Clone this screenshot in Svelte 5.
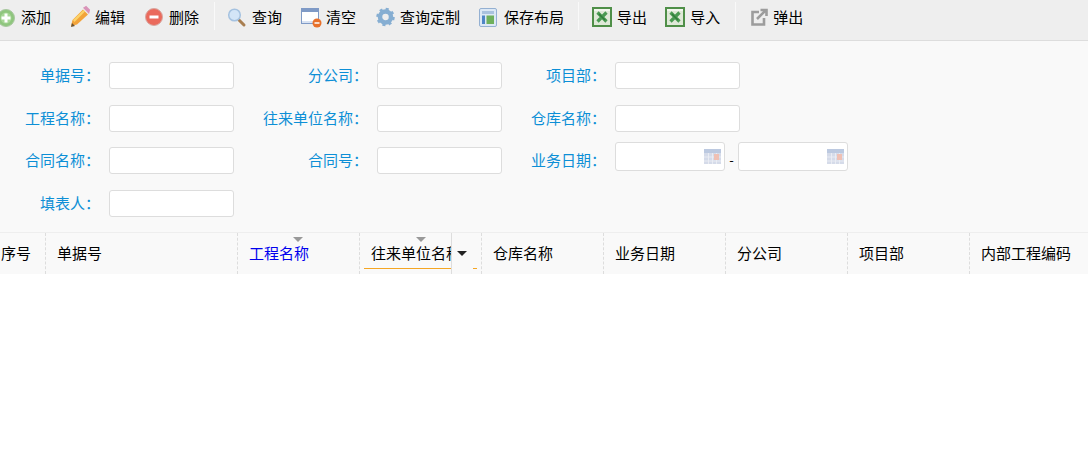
<script>
	const tools = [
		{ icon: 'add', label: '添加' },
		{ icon: 'edit', label: '编辑' },
		{ icon: 'del', label: '删除' },
		{ sep: true },
		{ icon: 'search', label: '查询' },
		{ icon: 'clear', label: '清空' },
		{ icon: 'gear', label: '查询定制' },
		{ icon: 'layout', label: '保存布局' },
		{ sep: true },
		{ icon: 'excel', label: '导出' },
		{ icon: 'excel', label: '导入' },
		{ sep: true },
		{ icon: 'popup', label: '弹出' }
	];

	const rows = [
		['单据号', '分公司', '项目部'],
		['工程名称', '往来单位名称', '仓库名称'],
		['合同名称', '合同号', '业务日期'],
		['填表人']
	];

	const columns = [
		{ label: '序号', width: 46, cls: 'first' },
		{ label: '单据号', width: 192 },
		{ label: '工程名称', width: 122, cls: 'sorted' },
		{ label: '往来单位名称', width: 122, cls: 'hover' },
		{ label: '仓库名称', width: 122 },
		{ label: '业务日期', width: 122 },
		{ label: '分公司', width: 122 },
		{ label: '项目部', width: 122 },
		{ label: '内部工程编码', width: 119 }
	];
</script>

{#snippet toolIcon(name)}
	<svg class="icon">
		{#if name === 'add'}
			<circle cx="9" cy="9" r="8.500" fill="#8fc67e" stroke="#a9c8a0" />
			<circle cx="9" cy="9" r="5.500" fill="#a7d696" />
			<path d="M9 4.500v9M4.500 9h9" stroke="#fff" stroke-width="3" />
		{:else if name === 'edit'}
			<path d="M1 17l1.500-6L13 0.500l5 5L7 15.500z" fill="#f2a33a" />
			<path d="M3 11L13.500 1l1.500 1.500L4.500 13z" fill="#fbd36a" />
			<path d="M14.500 -1l1.500-1 3 3-.5 2z" fill="#d993b8" stroke="#d993b8" stroke-width="2" />
			<path d="M1 18l1-4 3 3z" fill="#6b5230" />
		{:else if name === 'del'}
			<circle cx="9" cy="8" r="8.500" fill="#ea6a5c" stroke="#d8a8a2" />
			<path d="M4.500 8h9" stroke="#fff" stroke-width="3" />
		{:else if name === 'search'}
			<path d="M11 11l5 5" stroke="#a87e50" stroke-width="3" stroke-linecap="round" />
			<circle cx="6.500" cy="6" r="5.800" fill="#d3e5f7" stroke="#a5c2e0" stroke-width="1.500" />
		{:else if name === 'clear'}
			<rect x="0.500" y="-0.500" width="17" height="15" fill="#fff" stroke="#7f9ac6" />
			<rect x="1" y="0" width="16" height="3" fill="#7f9ac6" />
			<rect x="1" y="12" width="16" height="2" fill="#d8e2f2" />
			<circle cx="16" cy="14" r="4.500" fill="#e8702a" />
			<path d="M13.500 14h5" stroke="#fff" stroke-width="1.500" />
		{:else if name === 'gear'}
			<circle cx="9.500" cy="8" r="5.500" fill="none" stroke="#86aed2" stroke-width="4.500" />
			<circle cx="9.500" cy="8" r="8" fill="none" stroke="#86aed2" stroke-width="2.500" stroke-dasharray="3 3.280" />
		{:else if name === 'layout'}
			<rect x="0.500" y="-0.500" width="17" height="18" rx="1.500" fill="#dce8f5" stroke="#94b0d2" />
			<rect x="3" y="2" width="12" height="3" fill="#a9c2de" />
			<rect x="3" y="6.500" width="3" height="8.500" fill="#4f86c6" />
			<rect x="7.500" y="6.500" width="7.500" height="8.500" fill="#6fb05c" />
		{:else if name === 'excel'}
			<rect x="0" y="-2" width="20" height="20" fill="#4f8f48" />
			<rect x="2" y="0" width="16" height="16" fill="#dfe9d8" />
			<rect x="2" y="0" width="16" height="2" fill="#f2f6ee" />
			<path d="M5.500 3.500l9 9M14.500 3.500l-9 9" stroke="#4a9a52" stroke-width="3.200" />
			<path d="M7 5l6 6" stroke="#2f7d3a" stroke-width="1.500" />
		{:else if name === 'popup'}
			<path d="M8 3H1.500v12.500H13V9" fill="none" stroke="#9c9c9c" stroke-width="2.600" />
			<path d="M6 10l8-8M9.500 1h6v6" fill="none" stroke="#9c9c9c" stroke-width="2.600" />
		{/if}
	</svg>
{/snippet}

{#snippet calendar()}
	<svg class="cal" width="17" height="17" viewBox="0 0 17 17">
		<rect width="17" height="15" y="1" fill="#d5dbe9" />
		<rect width="17" height="4" y="1" fill="#bcc9e0" />
		<path d="M4.500 5v11M8.500 5v11M12.500 5v11M0 9h17M0 13h17" stroke="#eef0f5" stroke-width=".8" />
		<rect x="10" y="6" width="5" height="6" fill="#efc0b4" />
	</svg>
{/snippet}

<div class="page">
	<div class="toolbar">
		{#each tools as tool}
			{#if tool.sep}
				<span class="sep"></span>
			{:else}
				<span class="tool {tool.icon}">
					{@render toolIcon(tool.icon)}
					<span class="tool-text">{tool.label}</span>
				</span>
			{/if}
		{/each}
	</div>

	<div class="form">
		{#each rows as row, r}
			<div class="row" class:tight={r === 1}>
				{#each row as label}
					<div class="field">
						<span class="label">{label}：</span>
						{#if label === '业务日期'}
							<span class="date">{@render calendar()}</span>
							<span class="dash">-</span>
							<span class="date">{@render calendar()}</span>
						{:else}
							<span class="input"></span>
						{/if}
					</div>
				{/each}
			</div>
		{/each}
	</div>

	<div class="thead">
		{#each columns as col}
			<div class="th {col.cls ?? ''}" style="width: {col.width}px">
				{#if col.cls === 'sorted' || col.cls === 'hover'}
					<i class="sort"></i>
				{/if}
				<span class="text">{col.label}</span>
				{#if col.cls === 'hover'}
					<span class="menu"><i></i></span>
				{/if}
			</div>
		{/each}
	</div>
</div>

<style>
	:global(body) {
		background: #fff;
	}

	.page {
		width: 1088px;
		height: 471px;
		overflow: hidden;
		font-family: "Noto Sans CJK SC", "Liberation Sans", sans-serif;
		font-size: 15px;
		color: #000;
	}

	.toolbar {
		box-sizing: content-box;
		display: flex;
		align-items: center;
		height: 36px;
		padding-bottom: 4px;
		margin-left: -3px;
		background: #eee;
		border-bottom: 1px solid #ddd;
	}

	.tool {
		display: flex;
		align-items: center;
		gap: 6px;
		margin-right: 19px;
		white-space: nowrap;
	}

	.tool-text {
		padding-bottom: 3px;
	}

	.icon {
		flex-shrink: 0;
		width: 18px;
		height: 18px;
		overflow: visible;
	}

	.edit,
	.clear {
		margin-right: 20px;
	}

	.edit .icon,
	.clear .icon,
	.layout .icon,
	.excel .icon {
		width: 19px;
	}

	.excel {
		margin-right: 18px;
	}

	.tool:has(+ .sep) {
		margin-right: 15px;
	}

	.layout:has(+ .sep) {
		margin-right: 14px;
	}

	.popup {
		margin-left: 2px;
	}

	.popup .icon {
		width: 16px;
	}

	.sep {
		align-self: flex-start;
		width: 1px;
		height: 28px;
		margin-top: 2px;
		margin-right: 13px;
		background: #f9f9f9;
	}

	.form {
		box-sizing: border-box;
		height: 192px;
		padding-top: 21px;
		background: #f9f9f9;
		border-bottom: 1px solid #eee;
	}

	.row {
		display: flex;
		height: 27px;
		margin-bottom: 16px;
	}

	.row.tight {
		margin-bottom: 15px;
	}

	.field {
		display: flex;
		align-items: center;
		width: 268px;
		flex-shrink: 0;
	}

	.field:nth-child(2) {
		width: 238px;
	}

	.field:nth-child(3) {
		width: auto;
	}

	.label {
		box-sizing: border-box;
		display: flex;
		justify-content: flex-end;
		flex-shrink: 0;
		width: 109px;
		padding-right: 9px;
		padding-bottom: 3px;
		color: #0d8fd6;
		white-space: nowrap;
	}

	.input,
	.date {
		box-sizing: border-box;
		display: block;
		flex-shrink: 0;
		width: 125px;
		height: 27px;
		background: #fff;
		border: 1px solid #ddd;
		border-radius: 3px;
	}

	.date {
		position: relative;
		width: 110px;
		height: 29px;
		margin-top: -8px;
	}

	.cal {
		position: absolute;
		right: 3px;
		top: 5px;
	}

	.dash {
		flex-shrink: 0;
		width: 13px;
		text-align: center;
		padding-bottom: 3px;
		font-size: 13px;
	}

	.thead {
		display: flex;
		height: 41px;
		background: #f9f9f9;
	}

	.th {
		box-sizing: border-box;
		position: relative;
		flex-shrink: 0;
		display: flex;
		align-items: center;
		padding-left: 11px;
		padding-bottom: 3px;
		border-right: 1px dashed #ddd;
		white-space: nowrap;
		overflow: hidden;
	}

	.th.first {
		padding-left: 1px;
	}

	.th:last-child {
		border-right: none;
	}

	.sorted .text {
		color: #00e;
	}

	.sort {
		position: absolute;
		top: 4px;
		left: 55px;
		border: 5px solid transparent;
		border-top: 5px solid #999;
		border-bottom: none;
	}

	.hover .sort {
		left: 56px;
	}

	.hover .text {
		width: 80px;
		overflow: hidden;
	}

	.hover::after {
		content: "";
		position: absolute;
		left: 4px;
		right: 4px;
		bottom: 5px;
		border-bottom: 1px solid #f5a623;
	}

	.menu {
		position: absolute;
		z-index: 1;
		top: 0;
		left: 91px;
		width: 21px;
		height: 41px;
		background: #f9f9f9;
		border-left: 1px solid #ddd;
	}

	.menu i {
		position: absolute;
		top: 18px;
		left: 5px;
		border: 5px solid transparent;
		border-top: 5px solid #222;
		border-bottom: none;
	}
</style>
